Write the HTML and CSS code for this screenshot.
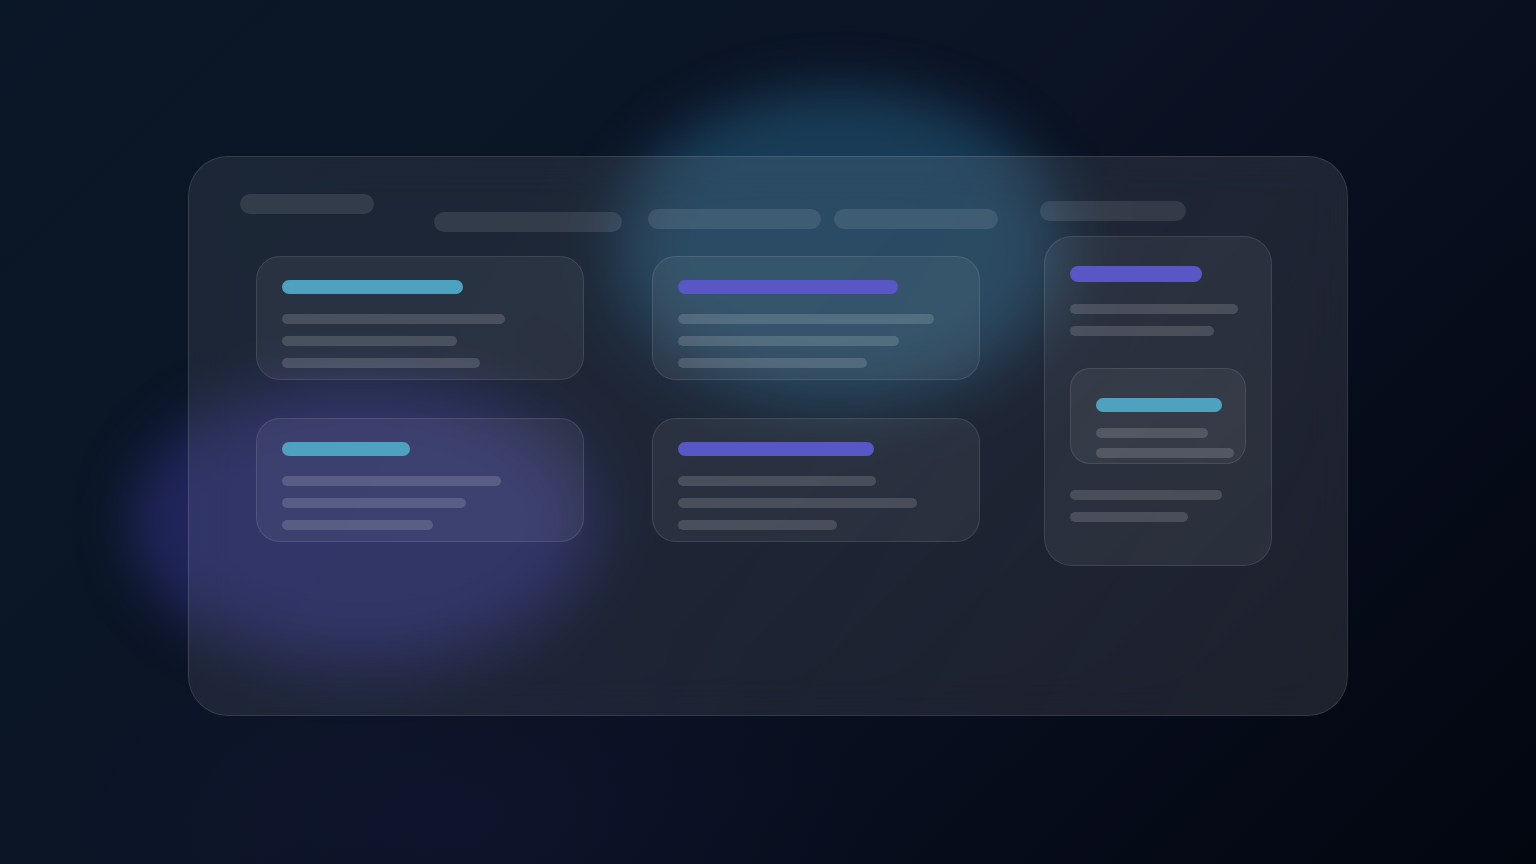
FILE: index.html
```html
<!DOCTYPE html>
<html lang="en">
<head>
<meta charset="utf-8">
<title>Glass dashboard skeleton</title>
<link rel="stylesheet" href="styles.css">
</head>
<body>
<div class="scene">
  <div class="blob blob-cyan"></div>
  <div class="blob blob-purple"></div>
  <main class="panel">
    <header class="head">
      <span class="hbar h1"></span>
      <span class="hbar h2"></span>
      <span class="hbar h3"></span>
      <span class="hbar h4"></span>
      <span class="hbar h5"></span>
    </header>
    <section class="body">
      <div class="col col-a">
        <article class="card">
          <span class="title cyan w181"></span>
          <div class="lines">
            <span class="line w223"></span>
            <span class="line w175"></span>
            <span class="line w198"></span>
          </div>
        </article>
        <article class="card">
          <span class="title cyan w128"></span>
          <div class="lines">
            <span class="line w219"></span>
            <span class="line w184"></span>
            <span class="line w151"></span>
          </div>
        </article>
      </div>
      <div class="col col-b">
        <article class="card">
          <span class="title purple w220"></span>
          <div class="lines">
            <span class="line w256"></span>
            <span class="line w221"></span>
            <span class="line w189"></span>
          </div>
        </article>
        <article class="card">
          <span class="title purple w196"></span>
          <div class="lines">
            <span class="line w198"></span>
            <span class="line w239"></span>
            <span class="line w159"></span>
          </div>
        </article>
      </div>
      <div class="col col-c">
        <article class="tall">
          <span class="title tall-title purple w132"></span>
          <div class="lines tall-lines">
            <span class="line w168"></span>
            <span class="line w144"></span>
          </div>
          <div class="nested">
            <span class="title cyan w126"></span>
            <div class="lines nested-lines">
              <span class="line w112"></span>
              <span class="line w138"></span>
            </div>
          </div>
          <div class="lines bottom-lines">
            <span class="line w152"></span>
            <span class="line w118"></span>
          </div>
        </article>
      </div>
    </section>
  </main>
</div>
</body>
</html>
```
FILE: styles.css
```css
* { box-sizing: border-box; }
html, body { margin: 0; padding: 0; height: 100%; }
body {
  background:
    radial-gradient(ellipse 600px 300px at 450px 820px, rgba(18, 22, 52, 0.5), transparent 70%),
    linear-gradient(135deg, #0a1727 0%, #0b1425 45%, #070c1b 75%, #02060f 100%);
  overflow: hidden;
  font-family: "Inter", "Liberation Sans", sans-serif;
}
.scene {
  position: relative;
  width: 1536px;
  height: 864px;
  padding-top: 156px;
}
.blob {
  position: absolute;
  border-radius: 50%;
  filter: blur(26px);
}
.blob-cyan {
  left: 615px;
  top: 90px;
  width: 450px;
  height: 315px;
  background: rgba(36, 92, 128, 0.55);
}
.blob-purple {
  left: 130px;
  top: 380px;
  width: 465px;
  height: 285px;
  background: rgba(48, 48, 128, 0.6);
}
.panel {
  position: relative;
  width: 1160px;
  height: 560px;
  margin: 0 auto;
  border-radius: 40px;
  border: 1px solid rgba(255, 255, 255, 0.11);
  background: linear-gradient(120deg, rgba(255, 255, 255, 0.075), rgba(255, 255, 255, 0.08) 50%, rgba(255, 255, 255, 0.1));
  backdrop-filter: blur(20px);
  padding-top: 37px;
}
.head {
  display: flex;
  align-items: flex-start;
  height: 38px;
}
.hbar {
  display: block;
  height: 20px;
  border-radius: 10px;
  background: rgba(255, 255, 255, 0.1);
}
.h1 { width: 134px; margin-left: 51px; }
.h2 { width: 188px; margin-left: 60px; margin-top: 18px; }
.h3 { width: 173px; margin-left: 26px; margin-top: 15px; }
.h4 { width: 164px; margin-left: 13px; margin-top: 15px; }
.h5 { width: 146px; margin-left: 42px; margin-top: 7px; }
.body {
  display: flex;
  align-items: flex-start;
  padding-left: 67px;
  margin-top: 4px;
}
.col { display: flex; flex-direction: column; }
.col-a, .col-b { width: 328px; gap: 38px; margin-top: 20px; }
.col-b { margin-left: 68px; }
.col-c { width: 228px; margin-left: 64px; }
.card {
  height: 124px;
  border-radius: 24px;
  border: 1px solid rgba(255, 255, 255, 0.1);
  background: rgba(255, 255, 255, 0.06);
  padding: 23px 25px 0;
}
.title {
  display: block;
  height: 14px;
  border-radius: 7px;
}
.cyan { background: #4fa2bf; }
.purple { background: #5956c6; }
.lines { display: flex; flex-direction: column; gap: 12px; margin-top: 20px; }
.line {
  display: block;
  height: 10px;
  border-radius: 5px;
  background: rgba(255, 255, 255, 0.15);
}
.tall {
  height: 330px;
  border-radius: 28px;
  border: 1px solid rgba(255, 255, 255, 0.1);
  background: rgba(255, 255, 255, 0.06);
  padding: 29px 25px 0;
}
.tall-title { height: 16px; border-radius: 8px; }
.tall-lines { margin-top: 22px; }
.nested {
  margin-top: 32px;
  height: 96px;
  width: 176px;
  border-radius: 20px;
  border: 1px solid rgba(255, 255, 255, 0.1);
  background: rgba(255, 255, 255, 0.05);
  padding: 29px 25px 0;
}
.nested-lines { margin-top: 16px; gap: 10px; }
.bottom-lines { margin-top: 26px; }
.w112 { width: 112px; } .w118 { width: 118px; } .w126 { width: 126px; }
.w128 { width: 128px; } .w132 { width: 132px; } .w138 { width: 138px; }
.w144 { width: 144px; } .w151 { width: 151px; } .w152 { width: 152px; }
.w159 { width: 159px; } .w168 { width: 168px; } .w175 { width: 175px; }
.w181 { width: 181px; } .w184 { width: 184px; } .w189 { width: 189px; }
.w196 { width: 196px; } .w198 { width: 198px; } .w219 { width: 219px; }
.w220 { width: 220px; } .w221 { width: 221px; } .w223 { width: 223px; }
.w239 { width: 239px; } .w256 { width: 256px; }
```
